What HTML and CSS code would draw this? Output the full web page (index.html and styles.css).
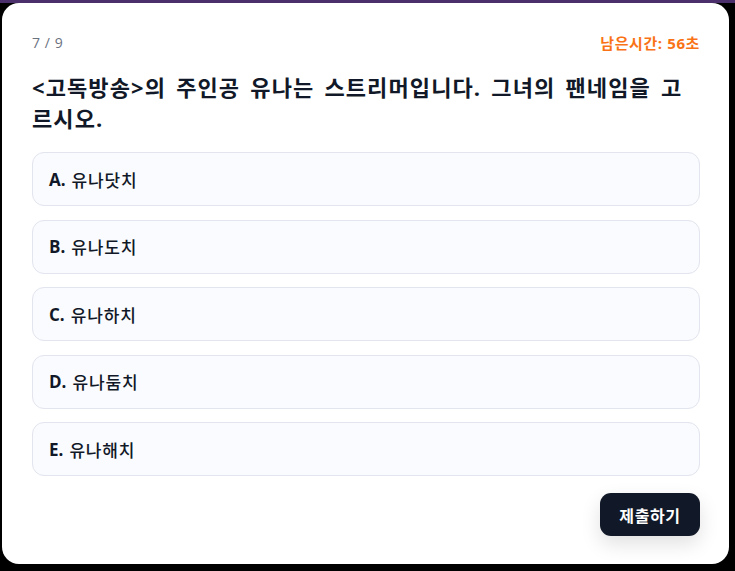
FILE: index.html
```html
<!DOCTYPE html>
<html lang="ko">
<head>
<meta charset="utf-8">
<link rel="stylesheet" href="styles.css">
</head>
<body>
<div class="topbar"></div>
<main class="card">
  <div class="meta">
    <span class="progress">7 / 9</span>
    <span class="timer">남은시간: 56초</span>
  </div>
  <h1 class="question">&lt;고독방송&gt;의 주인공 유나는 스트리머입니다. 그녀의 팬네임을 고르시오.</h1>
  <div class="options">
    <div class="option"><b>A.</b> 유나닷치</div>
    <div class="option"><b>B.</b> 유나도치</div>
    <div class="option"><b>C.</b> 유나하치</div>
    <div class="option"><b>D.</b> 유나둠치</div>
    <div class="option"><b>E.</b> 유나해치</div>
  </div>
  <div class="actions">
    <button class="submit">제출하기</button>
  </div>
</main>
</body>
</html>
```
FILE: styles.css
```css
html, body {
  margin: 0;
  padding: 0;
  background: #000;
  height: 571px;
  overflow: hidden;
}
body {
  font-family: "Open Sans", "Noto Sans CJK KR", sans-serif;
}
.topbar {
  height: 3px;
  background: #4b2f6c;
  position: absolute;
  top: 0; left: 0; right: 0;
}
.card {
  position: relative;
  margin: 3px 0 0 2px;
  width: 727px;
  height: 561px;
  box-sizing: border-box;
  background: #fff;
  border-radius: 17px;
  padding: 30px 29px 0 30px;
}
.meta {
  display: flex;
  justify-content: space-between;
  align-items: center;
  font-size: 14px;
  line-height: 20px;
}
.progress { color: #6b7280; letter-spacing: 0.04em; }
.timer { color: #f97316; font-weight: 700; font-size: 15px; letter-spacing: 0.04em; }
.question {
  margin: 19px 0 0;
  font-size: 22px;
  line-height: 31px;
  font-weight: 700;
  color: #111827;
  letter-spacing: 0.05em;
  word-spacing: 0.15em;
}
.options {
  margin-top: 18px;
  display: flex;
  flex-direction: column;
  gap: 13.5px;
}
.option {
  height: 52px;
  border: 1px solid #e2e4ee;
  border-radius: 12px;
  background: #fafbfe;
  display: flex;
  align-items: center;
  padding: 0 16px;
  font-size: 17px;
  font-weight: 500;
  color: #111827;
  gap: 6px;
  letter-spacing: 0.05em;
}
.option b { font-weight: 700; letter-spacing: 0; }
.actions {
  display: flex;
  justify-content: flex-end;
  margin-top: 17px;
}
.submit {
  font-family: inherit;
  background: #111827;
  color: #fff;
  border: 0;
  border-radius: 11px;
  width: 100px;
  height: 43px;
  font-size: 16px;
  font-weight: 700;
  letter-spacing: 0.04em;
  box-shadow: 0 8px 20px rgba(0,0,0,0.12);
}
```
